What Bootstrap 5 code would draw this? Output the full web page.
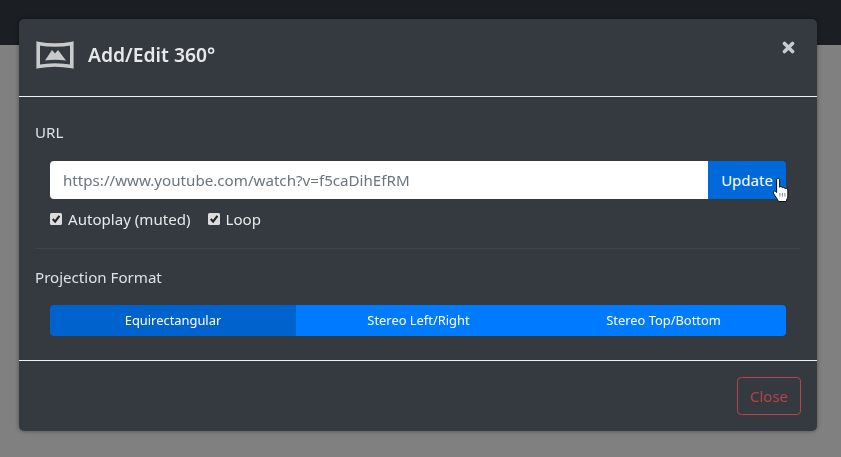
<!DOCTYPE html>
<html lang="en">
<head>
<meta charset="utf-8">
<title>Add/Edit 360</title>
<link href="https://cdn.jsdelivr.net/npm/bootstrap@5.3.0/dist/css/bootstrap.min.css" rel="stylesheet">
<style>
html,body{height:100%;overflow:hidden}
body{background:#808080;font-family:"Noto Sans","Open Sans",sans-serif;font-size:15px;color:#e9ecef}
.topstrip{height:45px;background:#1b1e22}
.dlg-wrap{display:block;background:transparent;padding:19px 24px 0 19px;overflow:hidden}
.dlg{width:798px;height:412px;background:#343a40;border:0;border-radius:5px;color:#e9ecef;font-size:15px;box-shadow:0 0 4px rgba(0,0,0,.4)}
.dlg .modal-header{height:78px;border-bottom:1px solid #f2f2f2;padding:0 16px 0 17px;align-items:flex-start;border-radius:0}
.hd-title{font-size:19.3px;font-weight:600;color:#e6e8ea;margin:0;line-height:24px}
.hd-left{padding-top:22px;gap:14px}
.x-btn{background:none;border:0;padding:0;margin-top:22px;margin-right:6px;line-height:0}
.dlg .modal-body{padding:0 16px;height:263px;flex:none}
.sec-label{font-size:15.1px;line-height:20px;padding-top:25px;margin:0;color:#dfe2e5}
.url-group{margin:19px 15px 0;height:38px;flex-wrap:nowrap;width:auto}
.url-group .form-control{height:38px;border:0;background:#fff;color:#6c757d;font-size:15.15px;padding:0 13px;border-radius:4px 0 0 4px}
.url-group .btn{width:78px;flex:none;background:#0069d9;border:0;color:#fff;font-size:15px;padding:0;border-radius:0 4px 4px 0}
.opts{margin:9px 15px 0;gap:17px;height:22px;font-size:15.1px;color:#e6e8ea;line-height:22px}
.opt{gap:6px}
.fake-check{width:12px;height:12px;background:#dcdcdc;border-radius:1.5px;display:inline-block;flex:none}
.fake-check svg{display:block}
.sep{border-top:1px solid #3e444a;margin:18px 0 0;opacity:1}
.sec-label.second{padding-top:18px}
.fmt-group{margin:18px 15px 0;height:31px;display:flex}
.fmt-group .btn{flex:1 1 0;border:0;border-radius:0;background:#007bff;color:#fff;font-size:12.9px;padding:0;line-height:31px}
.fmt-group .btn.active{background:#0062cc}
.fmt-group .btn:first-child{border-radius:4px 0 0 4px;flex:0 0 246px}
.fmt-group .btn:last-child{border-radius:0 4px 4px 0}
.dlg .modal-footer{border-top:1px solid #f2f2f2;padding:16px 16px 0 0;height:71px;align-items:flex-start;border-radius:0}
.close-btn{width:64px;height:38px;margin:0;padding:0;background:transparent;border:1px solid #b5434a;color:#b5434a;font-size:15px;border-radius:4px}
.cursor{position:absolute;left:772px;top:177px;line-height:0;z-index:2000}
</style>
</head>
<body>
<div class="topstrip"></div>
<div class="modal dlg-wrap" tabindex="-1">
  <div class="modal-content dlg">
    <div class="modal-header">
      <div class="d-flex hd-left align-items-center">
        <svg width="38" height="28" viewBox="0 0 38 28" aria-hidden="true">
          <path d="M2.2 2.4Q19 5.6 35.8 2.4V25.6Q19 22.4 2.2 25.6Z" fill="none" stroke="#c8cacb" stroke-width="3.6"/>
          <path d="M9 19.5L16 9L19 12.5L22 9L30 19.5Q19 18.2 9 19.5Z" fill="#c8cacb"/>
        </svg>
        <h5 class="hd-title">Add/Edit 360°</h5>
      </div>
      <button class="x-btn" type="button" aria-label="Close">
        <svg width="13" height="13" viewBox="0 0 13 13"><path d="M2.5 2.5L10.5 10.5M10.5 2.5L2.5 10.5" stroke="#c8cbcd" stroke-width="3.6" stroke-linecap="round"/></svg>
      </button>
    </div>
    <div class="modal-body">
      <p class="sec-label">URL</p>
      <div class="input-group url-group">
        <input class="form-control" type="text" value="https://www.youtube.com/watch?v=f5caDihEfRM">
        <button class="btn" type="button">Update</button>
      </div>
      <div class="d-flex opts">
        <div class="d-flex align-items-center opt"><span class="fake-check"><svg width="12" height="12" viewBox="0 0 12 12"><path d="M2.8 6L5.1 8.6L9.4 2.8" fill="none" stroke="#222" stroke-width="2.1"/></svg></span>Autoplay (muted)</div>
        <div class="d-flex align-items-center opt"><span class="fake-check"><svg width="12" height="12" viewBox="0 0 12 12"><path d="M2.8 6L5.1 8.6L9.4 2.8" fill="none" stroke="#222" stroke-width="2.1"/></svg></span>Loop</div>
      </div>
      <hr class="sep">
      <p class="sec-label second">Projection Format</p>
      <div class="fmt-group" role="group">
        <button class="btn active" type="button">Equirectangular</button>
        <button class="btn" type="button">Stereo Left/Right</button>
        <button class="btn" type="button">Stereo Top/Bottom</button>
      </div>
    </div>
    <div class="modal-footer">
      <button class="btn close-btn" type="button">Close</button>
    </div>
  </div>
</div>
<svg class="cursor" width="18" height="26" viewBox="0 0 18 26" aria-hidden="true">
  <path d="M4.6 2.8C4.6 .8 7.6 .8 7.6 2.8V10.2C8 9.2 10.2 9.2 10.4 10.8C10.8 9.9 12.9 10.1 13.1 11.8C13.6 11 15.8 11.3 15.8 13V18.5C15.8 21 14.7 22.5 14.2 24.5H6.5C5.8 22.2 3.2 19.6 1.4 16C.8 14.6 2.5 13.2 3.7 14.5L4.6 15.6Z" fill="#fff" stroke="#0c0c0c" stroke-width="1"/>
  <path d="M7.9 16V19.5M10.4 16V19.5M12.9 16V19.5" stroke="#555" stroke-width=".7"/>
</svg>
</body>
</html>
